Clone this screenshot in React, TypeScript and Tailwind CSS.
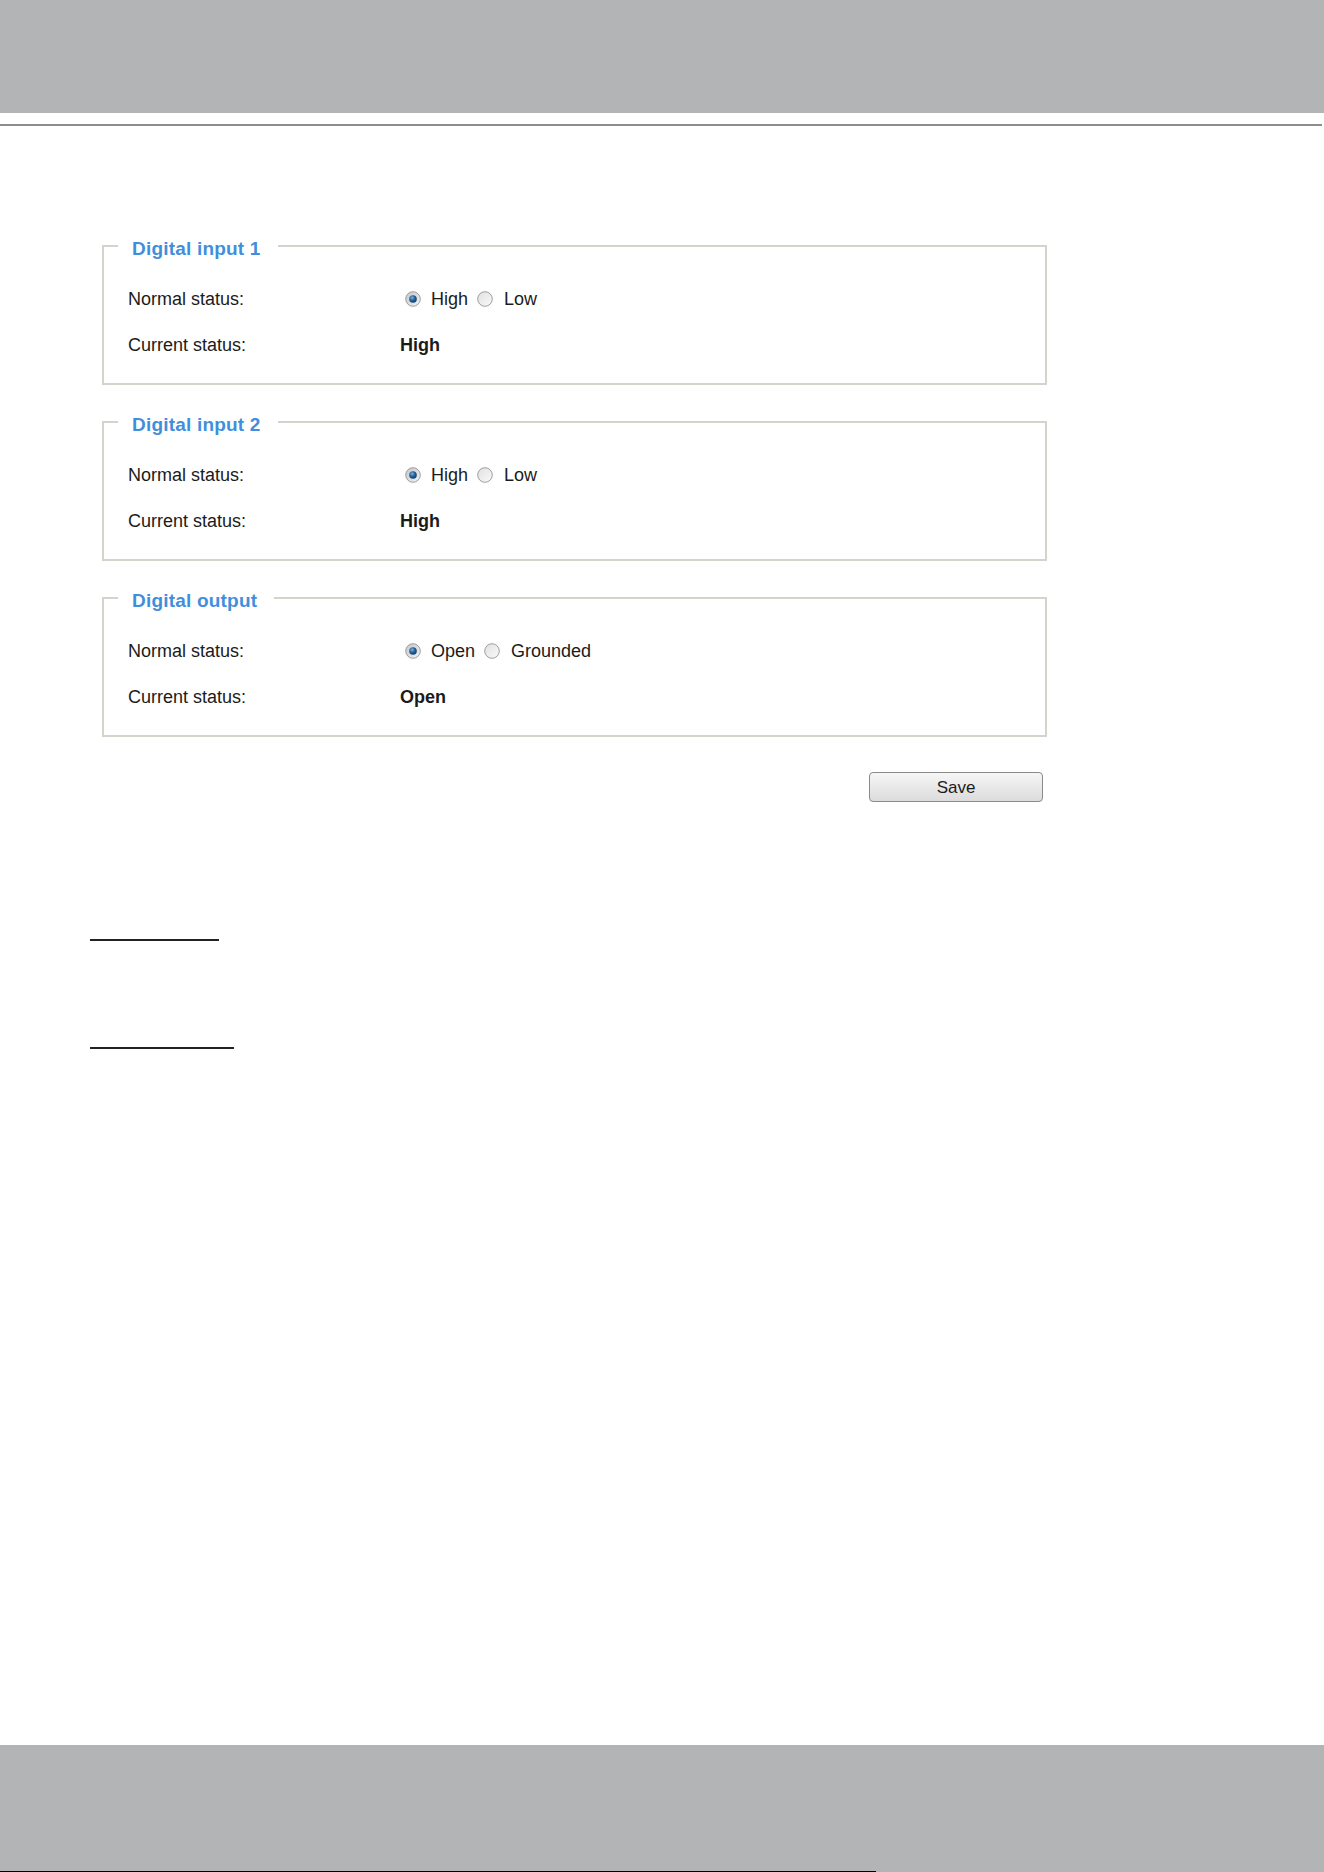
import React from "react";

function Radio({ checked }: { checked: boolean }) {
  return (
    <svg width="16" height="16" viewBox="0 0 16 16" className="shrink-0">
      <defs>
        <linearGradient id={checked ? "rgOn" : "rgOff"} x1="0" y1="0" x2="1" y2="1">
          <stop offset="0" stopColor={checked ? "#c4c4c4" : "#e0e0e0"} />
          <stop offset="1" stopColor={checked ? "#f4f4f4" : "#fafafa"} />
        </linearGradient>
        <radialGradient id="dot" cx="0.4" cy="0.35" r="0.7">
          <stop offset="0" stopColor="#7fb3e0" />
          <stop offset="0.5" stopColor="#23609c" />
          <stop offset="1" stopColor="#0f3a66" />
        </radialGradient>
      </defs>
      <circle cx="8" cy="8" r="7.3" fill={`url(#${checked ? "rgOn" : "rgOff"})`} stroke="#9e9e9e" strokeWidth="1" />
      {checked && <circle cx="8" cy="8" r="3.8" fill="url(#dot)" />}
    </svg>
  );
}

function Row({ label, children }: { label: string; children: React.ReactNode }) {
  return (
    <div className="flex h-[24px] items-center">
      <div className="w-[272px] shrink-0">{label}</div>
      <div className="flex items-center">{children}</div>
    </div>
  );
}

function Group({
  title,
  opts,
  current,
  className,
}: {
  title: string;
  opts: [string, string];
  current: string;
  className?: string;
}) {
  return (
    <fieldset className={`m-0 w-[945px] border-2 border-[#d6d3cd] p-0 ${className ?? ""}`}>
      <legend className="ml-[14px] pl-[14px] pr-[17px] pt-[6px] text-[19px] font-bold leading-[22px] tracking-[0.2px] text-[#3f8fdc]">
        {title}
      </legend>
      <div className="flex flex-col gap-[22px] pb-[26px] pl-[24px] pt-[27px]">
        <Row label="Normal status:">
          <span className="ml-[5px]">
            <Radio checked />
          </span>
          <span className="ml-[10px]">{opts[0]}</span>
          <span className="ml-[9px]">
            <Radio checked={false} />
          </span>
          <span className="ml-[11px]">{opts[1]}</span>
        </Row>
        <Row label="Current status:">
          <span className="font-bold">{current}</span>
        </Row>
      </div>
    </fieldset>
  );
}

export default function App() {
  return (
    <div
      className="flex h-[1872px] w-[1324px] flex-col bg-white text-[18px] text-[#1b1b1b]"
      style={{ fontFamily: '"Liberation Sans", Arial, sans-serif' }}
    >
      <div className="h-[113px] bg-[#b3b4b6]" />
      <div className="mt-[11px] h-[2px] w-[1322px] bg-[#8d8d8d]" />

      <div className="ml-[102px] mt-[106px] flex w-[945px] flex-col">
        <Group title="Digital input 1" opts={["High", "Low"]} current="High" />
        <Group title="Digital input 2" opts={["High", "Low"]} current="High" className="mt-[23px]" />
        <Group title="Digital output" opts={["Open", "Grounded"]} current="Open" className="mt-[23px]" />

        <div className="mt-[35px] flex justify-end pr-[4px]">
          <button className="flex h-[30px] w-[174px] items-center justify-center rounded-[4px] border border-[#8a8a8a] bg-gradient-to-b from-[#f6f6f6] to-[#dcdcdc] text-[17px] leading-none text-[#1b1b1b]">
            Save
          </button>
        </div>
      </div>

      <div className="ml-[90px] mt-[137px] h-[2px] w-[129px] bg-[#222222]" />
      <div className="ml-[90px] mt-[106px] h-[2px] w-[144px] bg-[#222222]" />

      <div className="mt-auto flex h-[127px] flex-col justify-end bg-[#b3b4b6]">
        <div className="h-[1px] w-[876px] bg-black" />
      </div>
    </div>
  );
}
